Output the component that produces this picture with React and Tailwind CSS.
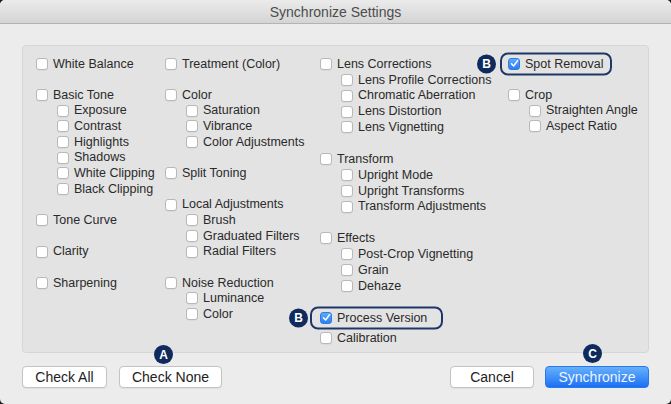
import React from "react";

const FONT = { fontFamily: '"Liberation Sans", Arial, sans-serif' };

function Box({ checked }) {
  if (checked) {
    return (
      <span className="flex h-[12px] w-[12px] shrink-0 items-center justify-center rounded-[3px] border border-[#2f7ce6] bg-gradient-to-b from-[#5ea9fb] to-[#2a7ff2]">
        <svg width="9" height="9" viewBox="0 0 9 9">
          <path d="M1.5 4.8 L3.6 7 L7.6 1.6" fill="none" stroke="#fff" strokeWidth="1.5" strokeLinecap="round" strokeLinejoin="round" />
        </svg>
      </span>
    );
  }
  return (
    <span className="h-[12px] w-[12px] shrink-0 rounded-[3px] border border-[#b8b8b8] bg-white shadow-[0_0.5px_0.5px_rgba(0,0,0,0.08)]" />
  );
}

function Badge({ letter, className }) {
  return (
    <span
      className={"absolute flex h-[19px] w-[19px] items-center justify-center rounded-full bg-[#0f2a5c] text-[12px] font-bold leading-none text-white " + className}
    >
      {letter}
    </span>
  );
}

function Item({ label, sub, checked, h = "h-[15.65px]", children }) {
  return (
    <div className={"relative flex items-center " + h + (sub ? " pl-[21px]" : "")}>
      {children}
      <div className="relative flex items-center gap-[5px]">
        <Box checked={checked} />
        <span className="whitespace-nowrap text-[12.5px] leading-none text-[#2a2a2a]">{label}</span>
      </div>
    </div>
  );
}

function Gap({ h = "h-[15.65px]" }) {
  return <div className={h} />;
}

function Highlight({ left, right }) {
  return (
    <span
      className="absolute top-1/2 h-[23px] -translate-y-1/2 rounded-[8px] border-2 border-[#1d3868]"
      style={{ left, right }}
    />
  );
}

export default function App() {
  return (
    <div className="h-[404px] w-[671px] bg-[#1a1a1a]" style={FONT}>
      <div className="flex h-[404px] w-[671px] flex-col overflow-hidden rounded-[5px] bg-[#ececec]">
        <div className="flex h-[24px] shrink-0 items-center justify-center border-b border-[#b3b3b3] bg-gradient-to-b from-[#ebebeb] to-[#d4d4d4] pt-[1px]">
          <span className="text-[14px] text-[#4d4d4d]">Synchronize Settings</span>
        </div>

        <div className="mx-[22px] mt-[21px] h-[308px] rounded-[4px] border border-[#d6d6d6] bg-[#e3e3e3] pl-[13px] pt-[10px]">
          <div className="flex">
            <div className="flex w-[129px] flex-col">
              <Item label="White Balance" />
              <Gap />
              <Item label="Basic Tone" />
              <Item sub label="Exposure" />
              <Item sub label="Contrast" />
              <Item sub label="Highlights" />
              <Item sub label="Shadows" />
              <Item sub label="White Clipping" />
              <Item sub label="Black Clipping" />
              <Gap />
              <Item label="Tone Curve" />
              <Gap />
              <Item label="Clarity" />
              <Gap />
              <Item label="Sharpening" />
            </div>

            <div className="flex w-[155px] flex-col">
              <Item label="Treatment (Color)" />
              <Gap />
              <Item label="Color" />
              <Item sub label="Saturation" />
              <Item sub label="Vibrance" />
              <Item sub label="Color Adjustments" />
              <Gap />
              <Item label="Split Toning" />
              <Gap />
              <Item label="Local Adjustments" />
              <Item sub label="Brush" />
              <Item sub label="Graduated Filters" />
              <Item sub label="Radial Filters" />
              <Gap />
              <Item label="Noise Reduction" />
              <Item sub label="Luminance" />
              <Item sub label="Color" />
            </div>

            <div className="flex w-[188px] flex-col">
              <Item h="h-[15.86px]" label="Lens Corrections" />
              <Item h="h-[15.86px]" sub label="Lens Profile Corrections" />
              <Item h="h-[15.86px]" sub label="Chromatic Aberration" />
              <Item h="h-[15.86px]" sub label="Lens Distortion" />
              <Item h="h-[15.86px]" sub label="Lens Vignetting" />
              <Gap h="h-[15.86px]" />
              <Item h="h-[15.86px]" label="Transform" />
              <Item h="h-[15.86px]" sub label="Upright Mode" />
              <Item h="h-[15.86px]" sub label="Upright Transforms" />
              <Item h="h-[15.86px]" sub label="Transform Adjustments" />
              <Gap h="h-[15.86px]" />
              <Item h="h-[15.86px]" label="Effects" />
              <Item h="h-[15.86px]" sub label="Post-Crop Vignetting" />
              <Item h="h-[15.86px]" sub label="Grain" />
              <Item h="h-[15.86px]" sub label="Dehaze" />
              <div className="h-[14px]" />
              <Item h="h-[20px]" checked label="Process Version">
                <Highlight left="-10px" right="calc(100% - 123px)" />
                <Badge letter="B" className="left-[-31px] top-1/2 -translate-y-1/2" />
              </Item>
              <Item h="h-[20px]" label="Calibration" />
            </div>

            <div className="flex flex-col">
              <Item checked label="Spot Removal">
                <Highlight left="-8px" right="calc(100% - 104px)" />
                <Badge letter="B" className="left-[-31px] top-1/2 -translate-y-1/2" />
              </Item>
              <Gap />
              <Item label="Crop" />
              <Item sub label="Straighten Angle" />
              <Item sub label="Aspect Ratio" />
            </div>
          </div>
        </div>

        <div className="mx-[22px] mt-[13px] flex items-start justify-between">
          <div className="flex gap-[12px]">
            <button className="h-[22px] w-[85px] rounded-[4px] border border-[#c3c3c3] bg-white text-[14px] leading-none text-[#222] shadow-[0_1px_0_rgba(0,0,0,0.05)]">
              Check All
            </button>
            <button className="relative h-[22px] w-[103px] rounded-[4px] border border-[#c3c3c3] bg-white text-[14px] leading-none text-[#222] shadow-[0_1px_0_rgba(0,0,0,0.05)]">
              Check None
              <Badge letter="A" className="left-[34px] top-[-22px]" />
            </button>
          </div>
          <div className="flex gap-[11px]">
            <button className="h-[22px] w-[84px] rounded-[4px] border border-[#c3c3c3] bg-white text-[14px] leading-none text-[#222] shadow-[0_1px_0_rgba(0,0,0,0.05)]">
              Cancel
            </button>
            <button className="relative h-[22px] w-[104px] rounded-[4px] border border-[#2a78ee] bg-gradient-to-b from-[#66b0fc] to-[#1b6ff3] text-[14px] leading-none text-[#eef5ff]">
              Synchronize
              <Badge letter="C" className="left-[37px] top-[-23px]" />
            </button>
          </div>
        </div>
      </div>
    </div>
  );
}
